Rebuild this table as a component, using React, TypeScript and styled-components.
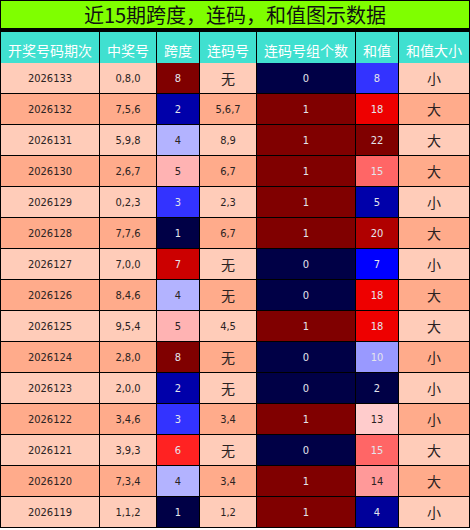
import React from 'react';
import styled, { createGlobalStyle } from 'styled-components';

const GlobalStyle = createGlobalStyle`
  html, body {
    margin: 0;
    padding: 0;
    background: #fff;
  }
`;

const Board = styled.div`
  display: grid;
  grid-template-columns: 98px 56px 42px 56px 98px 42px 70px;
  grid-auto-rows: 30px;
  gap: 1px;
  padding: 1px;
  width: 468px;
  background: #000;
`;

const Title = styled.div`
  grid-column: 1 / -1;
  height: 27px;
  display: flex;
  align-items: center;
  justify-content: center;
  background: #7fff00;
  color: #111;
  font-family: 'Noto Sans CJK SC', 'Noto Sans', sans-serif;
  font-size: 20px;
  line-height: 1;
`;

const HeadCell = styled.div`
  height: 35px;
  display: flex;
  align-items: center;
  justify-content: center;
  background: #40e0d0;
  color: #fff;
  font-family: 'Noto Sans CJK SC', 'Noto Sans', sans-serif;
  font-size: 14px;
  white-space: nowrap;
`;

const Cell = styled.div<{ $bg: string; $light?: boolean; $cjk?: boolean }>`
  display: flex;
  align-items: center;
  justify-content: center;
  background: ${(p) => p.$bg};
  color: ${(p) => (p.$light ? '#e4e4ec' : '#2a2222')};
  font-family: ${(p) =>
    p.$cjk
      ? "'Noto Sans CJK SC', sans-serif"
      : "'DejaVu Sans Condensed', 'DejaVu Sans', sans-serif"};
  font-size: ${(p) => (p.$cjk ? '14px' : '11px')};
`;

const headers = ['开奖号码期次', '中奖号', '跨度', '连码号', '连码号组个数', '和值', '和值大小'];

type Row = [string, string, number, string, number, number, string];

const rows: Row[] = [
  ['2026133', '0,8,0', 8, '无', 0, 8, '小'],
  ['2026132', '7,5,6', 2, '5,6,7', 1, 18, '大'],
  ['2026131', '5,9,8', 4, '8,9', 1, 22, '大'],
  ['2026130', '2,6,7', 5, '6,7', 1, 15, '大'],
  ['2026129', '0,2,3', 3, '2,3', 1, 5, '小'],
  ['2026128', '7,7,6', 1, '6,7', 1, 20, '大'],
  ['2026127', '7,0,0', 7, '无', 0, 7, '小'],
  ['2026126', '8,4,6', 4, '无', 0, 18, '大'],
  ['2026125', '9,5,4', 5, '4,5', 1, 18, '大'],
  ['2026124', '2,8,0', 8, '无', 0, 10, '小'],
  ['2026123', '2,0,0', 2, '无', 0, 2, '小'],
  ['2026122', '3,4,6', 3, '3,4', 1, 13, '小'],
  ['2026121', '3,9,3', 6, '无', 0, 15, '大'],
  ['2026120', '7,3,4', 4, '3,4', 1, 14, '大'],
  ['2026119', '1,1,2', 1, '1,2', 1, 4, '小'],
];

const spanColors: Record<number, string> = {
  1: '#000046',
  2: '#0000aa',
  3: '#3333ff',
  4: '#b3b3ff',
  5: '#ffb3b3',
  6: '#ff2222',
  7: '#cc0000',
  8: '#800000',
};

const sumColors: Record<number, string> = {
  2: '#000046',
  4: '#00009a',
  5: '#0000aa',
  7: '#0000ff',
  8: '#3333ff',
  10: '#9999ff',
  13: '#ffcccc',
  14: '#ff9999',
  15: '#ff6666',
  18: '#ee0000',
  20: '#b00000',
  22: '#800000',
};

const paleSpan = [4, 5];
const paleSum = [13, 14];

export default function App() {
  return (
    <>
      <GlobalStyle />
      <Board>
        <Title>近15期跨度，连码，和值图示数据</Title>
        {headers.map((h) => (
          <HeadCell key={h}>{h}</HeadCell>
        ))}
        {rows.map(([issue, nums, span, run, count, sum, size], i) => {
          const bg = i % 2 === 0 ? '#ffccb9' : '#ffab8b';
          return (
            <React.Fragment key={issue}>
              <Cell $bg={bg}>{issue}</Cell>
              <Cell $bg={bg}>{nums}</Cell>
              <Cell $bg={spanColors[span]} $light={!paleSpan.includes(span)}>
                {span}
              </Cell>
              <Cell $bg={bg} $cjk={run === '无'}>
                {run}
              </Cell>
              <Cell $bg={count ? '#800000' : '#000046'} $light>
                {count}
              </Cell>
              <Cell $bg={sumColors[sum]} $light={!paleSum.includes(sum)}>
                {sum}
              </Cell>
              <Cell $bg={bg} $cjk>
                {size}
              </Cell>
            </React.Fragment>
          );
        })}
      </Board>
    </>
  );
}
